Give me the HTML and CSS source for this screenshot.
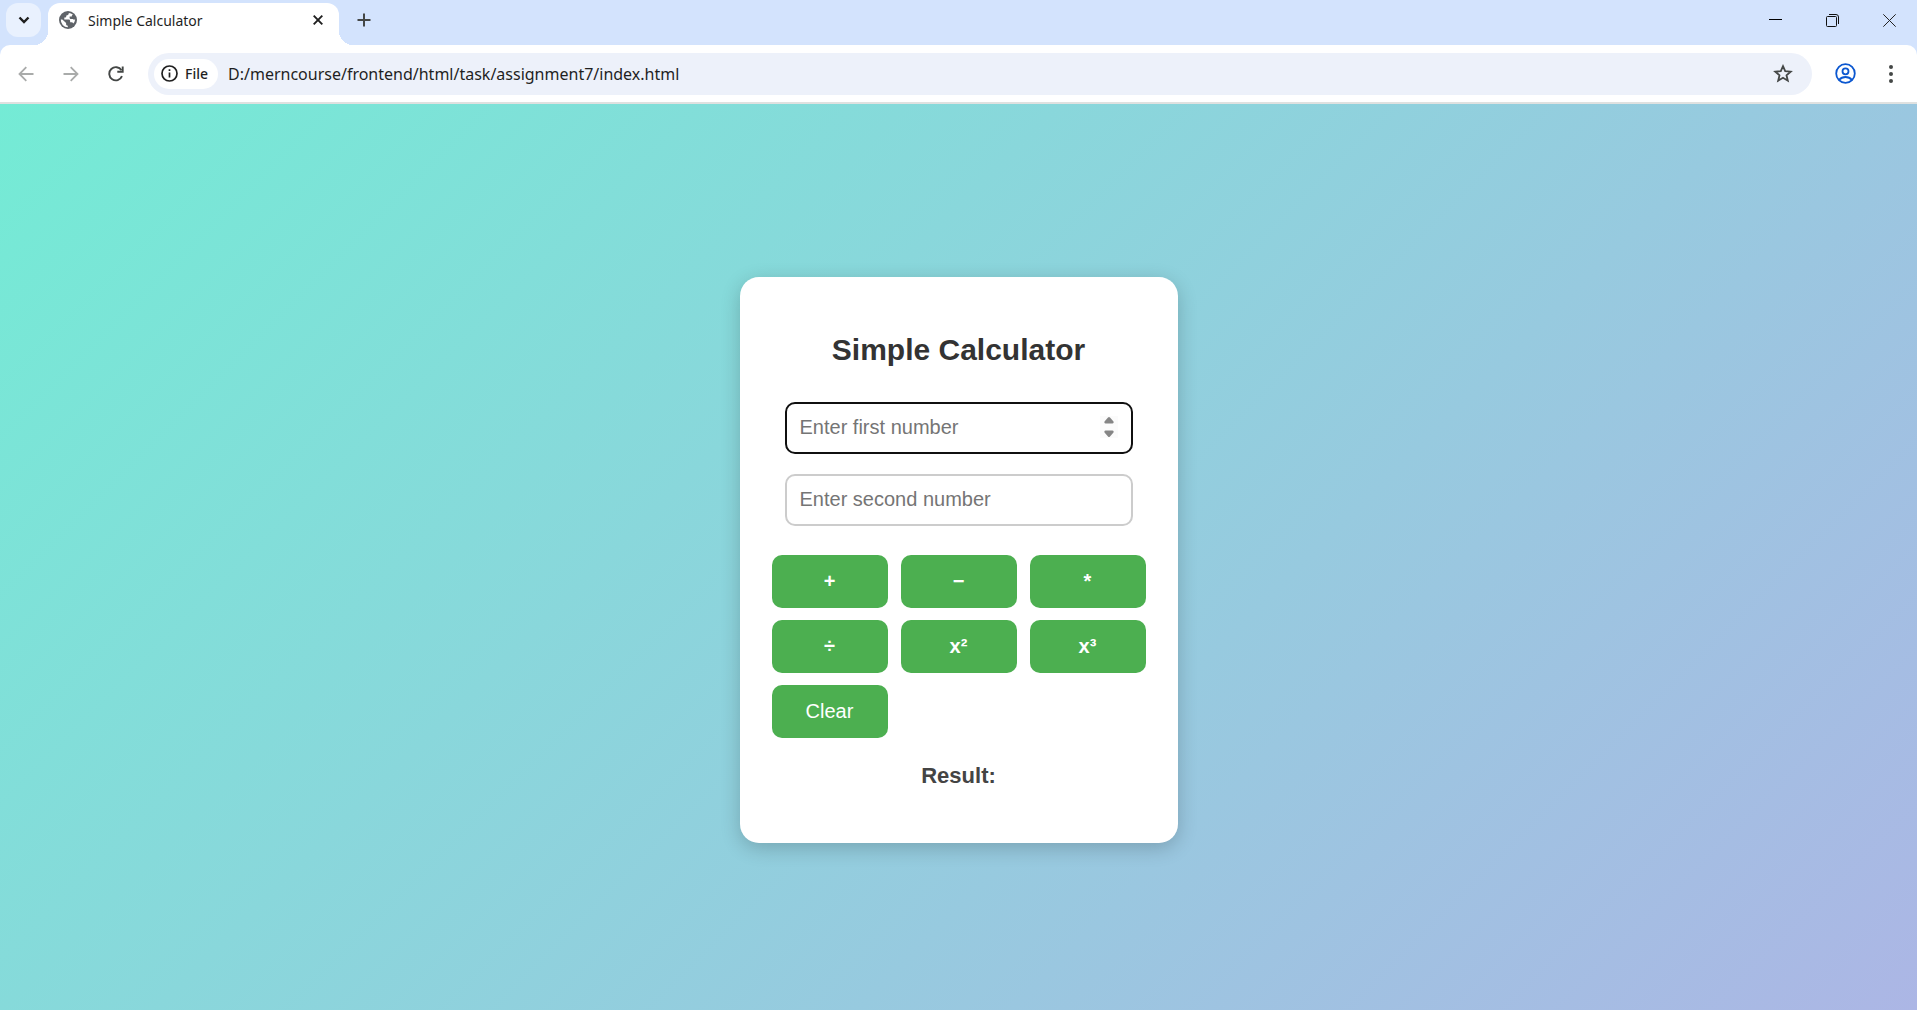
FILE: index.html
```html
<!DOCTYPE html>
<html lang="en">
<head>
    <meta charset="UTF-8">
    <meta name="viewport" content="width=device-width, initial-scale=1.0">
    <title>Simple Calculator</title>
    <link rel="stylesheet" href="styles.css">
</head>
<body>
    <header class="browser">
        <div class="tab-strip">
            <button class="tab-search" type="button" aria-label="Search tabs">
                <svg width="12" height="8" viewBox="0 0 12 8"><path d="M1.5 1.5 6 6l4.500-4.500" fill="none" stroke="#1f1f1f" stroke-width="2.400"/></svg>
            </button>
            <div class="tab">
                <svg width="18" height="18" viewBox="0 0 18 18">
                    <circle cx="9" cy="9" r="9" fill="#5f6368"/>
                    <path d="M9.800 1.900C9.900 3.500 8.900 4.200 7.300 4.400 7.400 5.900 6.800 6.600 5.300 6.600v1.800h4.300c1 0 1.500.600 1.500 1.500v1.300h1.400c.900 0 1.500.400 1.800 1.200A7.200 7.200 0 0 0 16.200 8.200c-1 .700-1.600.600-2.300-.200h-1.700c-1 0-1.600-.700-1.600-1.600V5.500h2.200c0-1 .400-1.500 1.200-1.700A7.200 7.200 0 0 0 9.800 1.900ZM1.800 8.600a7.200 7.200 0 0 0 7 7.600v-1.500c-1.100 0-1.700-.700-1.700-1.700v-.900L3.300 8.600Z" fill="#fff"/>
                </svg>
                <span class="tab-title">Simple Calculator</span>
                <button class="tab-close" type="button" aria-label="Close tab">
                    <svg width="10" height="10" viewBox="0 0 10 10"><path d="m.700.700 8.600 8.600m0-8.600L.700 9.300" stroke="#1f1f1f" stroke-width="1.900"/></svg>
                </button>
            </div>
            <button class="new-tab" type="button" aria-label="New tab">
                <svg width="14" height="14" viewBox="0 0 14 14"><path d="M7 .500v13M.500 7h13" stroke="#444746" stroke-width="2"/></svg>
            </button>
            <div class="window-controls">
                <button type="button" aria-label="Minimize">
                    <svg width="13" height="13" viewBox="0 0 13 13"><path d="M0 5.500h13" stroke="#000"/></svg>
                </button>
                <button type="button" aria-label="Restore">
                    <svg width="13" height="13" viewBox="0 0 13 13" fill="none" stroke="#111"><rect x=".500" y="2.500" width="10" height="10" rx="1"/><path d="M3 .500h7a2.500 2.500 0 0 1 2.500 2.500v7"/></svg>
                </button>
                <button type="button" aria-label="Close">
                    <svg width="13" height="13" viewBox="0 0 13 13"><path d="m.300.300 12.400 12.400m0-12.400L.300 12.700" stroke="#222"/></svg>
                </button>
            </div>
        </div>
        <div class="toolbar">
            <div class="nav-buttons">
                <button type="button" aria-label="Back">
                    <svg width="16" height="16" viewBox="0 0 16 16" fill="none" stroke="#a9abaa" stroke-width="1.800"><path d="M15.500 8H2M8.300 1.200 1.500 8l6.800 6.800"/></svg>
                </button>
                <button type="button" aria-label="Forward">
                    <svg width="16" height="16" viewBox="0 0 16 16" fill="none" stroke="#a9abaa" stroke-width="1.800"><path d="M.500 8H14M7.700 1.200 14.500 8l-6.800 6.800"/></svg>
                </button>
                <button type="button" aria-label="Reload">
                    <svg width="16" height="16" viewBox="0 0 16 16" fill="none" stroke="#444746" stroke-width="1.900"><path d="M14 10.200A6.600 6.600 0 1 1 13.500 4.300"/><path d="M14.700.500v5.200H9.300"/></svg>
                </button>
            </div>
            <div class="address-bar">
                <button class="file-chip" type="button">
                    <svg width="17" height="17" viewBox="0 0 17 17"><circle cx="8.500" cy="8.500" r="7.500" fill="none" stroke="#1f1f1f" stroke-width="1.700"/><path d="M8.500 7.500v5M8.500 4.300v1.800" stroke="#1f1f1f" stroke-width="1.700"/></svg>
                    File
                </button>
                <input class="url" type="text" aria-label="Address" value="D:/merncourse/frontend/html/task/assignment7/index.html">
                <button class="bookmark" type="button" aria-label="Bookmark this page">
                    <svg width="20" height="19" viewBox="0 0 20 19"><path d="m10 2.200 2.200 5 5.500.500-4.200 3.600 1.300 5.400-4.800-2.900-4.800 2.900 1.300-5.400L2.300 7.700l5.500-.500Z" fill="none" stroke="#444746" stroke-width="1.800"/></svg>
                </button>
            </div>
            <button class="profile" type="button" aria-label="Profile">
                <svg width="21" height="21" viewBox="0 0 21 21" fill="none" stroke="#0b57d0" stroke-width="1.800"><circle cx="10.500" cy="10.500" r="9.300"/><circle cx="10.500" cy="8.300" r="3"/><path d="M4 17c3.500-4 9.500-4 13 0"/></svg>
            </button>
            <button class="menu" type="button" aria-label="Menu">
                <svg width="4" height="18" viewBox="0 0 4 18" fill="#444746"><circle cx="2" cy="2" r="2"/><circle cx="2" cy="9" r="2"/><circle cx="2" cy="16" r="2"/></svg>
            </button>
        </div>
    </header>

    <main class="page">
        <div class="calculator">
            <h2>Simple Calculator</h2>
            <div class="field">
                <input class="active" type="number" id="num1" placeholder="Enter first number" aria-label="First number">
                <svg class="spinner" width="18" height="22" viewBox="0 0 18 22">
                    <path d="M0 0h18v22H0Z" fill="#fbfbfb"/>
                    <path d="M8 1.500q1-1 2 0l3.500 4q.700 2-1 2H5.500q-1.700 0-1-2ZM8 20.500q1 1 2 0l3.500-4q.700-2-1-2H5.500q-1.700 0-1 2Z" fill="#858585"/>
                </svg>
            </div>
            <div class="field">
                <input type="number" id="num2" placeholder="Enter second number" aria-label="Second number">
            </div>
            <div class="buttons">
                <button class="operator" type="button">+</button>
                <button class="operator" type="button">−</button>
                <button class="operator" type="button">*</button>
                <button class="operator" type="button">÷</button>
                <button class="operator" type="button">x²</button>
                <button class="operator" type="button">x³</button>
                <button type="button">Clear</button>
            </div>
            <h3 id="result">Result:</h3>
        </div>
    </main>
</body>
</html>
```
FILE: styles.css
```css
* {
    box-sizing: border-box;
}

body {
    margin: 0;
    min-height: 100vh;
    display: flex;
    flex-direction: column;
    font-family: "Liberation Sans", Arial, sans-serif;
}

button {
    border: none;
    background: none;
    padding: 0;
    cursor: pointer;
}

svg {
    display: block;
    flex-shrink: 0;
}

/* Browser frame */
.browser {
    background: #d3e3fd;
    border-bottom: 2px solid #dfe1e0;
    font-family: "Noto Sans", "Open Sans", sans-serif;
    color: #1f1f1f;
}

.tab-strip {
    display: flex;
    height: 45px;
    padding: 3px 21px 0 6px;
}

.tab-search {
    display: flex;
    align-items: center;
    justify-content: center;
    width: 35px;
    height: 34px;
    border-radius: 12px;
    background: #e9f1fe;
}

.tab {
    position: relative;
    display: flex;
    align-items: center;
    width: 291px;
    margin-left: 7px;
    padding: 0 16px 8px 11px;
    border-radius: 12px 12px 0 0;
    background: #fff;
}

.tab::before,
.tab::after {
    content: "";
    position: absolute;
    bottom: 0;
    width: 14px;
    height: 14px;
}

.tab::before {
    right: 100%;
    background: radial-gradient(circle at 0 0, transparent 14px, #fff 14px);
}

.tab::after {
    left: 100%;
    background: radial-gradient(circle at 100% 0, transparent 14px, #fff 14px);
}

.tab-title {
    flex: 1;
    margin-left: 11px;
    font-size: 14px;
}

.new-tab {
    margin-left: 18px;
    padding-bottom: 8px;
}

.window-controls {
    display: flex;
    gap: 44px;
    margin-left: auto;
    padding-bottom: 8px;
}

.toolbar {
    display: flex;
    align-items: center;
    height: 57px;
    padding: 0 24px 0 18px;
    border-radius: 10px 10px 0 0;
    background: #fff;
}

.nav-buttons {
    display: flex;
    gap: 29px;
}

.address-bar {
    flex: 1;
    display: flex;
    align-items: center;
    height: 42px;
    margin-left: 24px;
    padding: 0 19px 0 6px;
    border-radius: 21px;
    background: #edf1fa;
}

.file-chip {
    display: flex;
    align-items: center;
    gap: 7px;
    height: 30px;
    padding: 0 10px 0 7px;
    border-radius: 15px;
    background: #fff;
    color: #1f1f1f;
    font: 500 14px "Noto Sans", "Open Sans", sans-serif;
}

.url {
    flex: 1;
    margin-left: 10px;
    padding: 0;
    border: none;
    outline: none;
    background: none;
    color: #1f1f1f;
    font: 16px "Noto Sans", "Open Sans", sans-serif;
}

.profile {
    margin-left: 23px;
}

.menu {
    margin-left: 33px;
}

/* Page */
.page {
    flex: 1;
    display: flex;
    justify-content: center;
    align-items: center;
    padding-top: 6px;
    background: linear-gradient(135deg, #74ebd5, #acb6e5);
}

.calculator {
    width: 438px;
    padding: 32px;
    border-radius: 19px;
    background: #fff;
    text-align: center;
    box-shadow: 0 5px 20px rgba(0, 0, 0, 0.2);
}

.calculator h2 {
    margin: 24px 0 35px;
    color: #333;
    font-size: 30px;
    line-height: 34px;
}

.field {
    position: relative;
    margin: 0 13px 20px;
}

.field input {
    display: block;
    width: 100%;
    height: 52px;
    padding: 0 13px 2px;
    border: 2px solid #ccc;
    border-radius: 10px;
    outline: none;
    background: #fff;
    font: 20px "Liberation Sans", Arial, sans-serif;
    appearance: textfield;
}

.field input::placeholder {
    color: #757575;
}

.field input.active,
.field input:focus {
    border-color: #101010;
}

.spinner {
    position: absolute;
    top: 14px;
    right: 15px;
}

.buttons {
    display: grid;
    grid-template-columns: repeat(3, 1fr);
    gap: 12px 13px;
    margin-top: 29px;
}

.buttons button {
    height: 53px;
    padding-bottom: 1px;
    border-radius: 10px;
    background: #4caf50;
    color: #fff;
    font: 20px "Liberation Sans", Arial, sans-serif;
}

.buttons .operator {
    font-weight: bold;
}

.buttons button:hover {
    background: #45a049;
}

.calculator h3 {
    margin: 25px 0 22px;
    color: #444;
    font-size: 22px;
    line-height: 26px;
}
```
